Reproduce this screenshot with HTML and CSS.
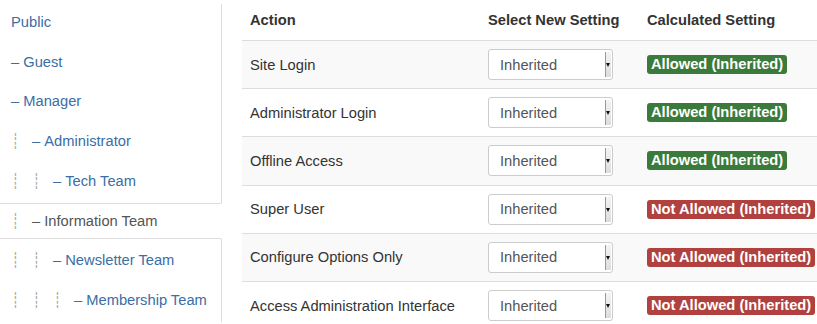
FILE: index.html
```html
<!DOCTYPE html>
<html lang="en">
<head>
  <meta charset="UTF-8" />
  <title>Permissions</title>
  <link rel="stylesheet" href="styles.css">
</head>
<body>
  <div class="rules">
    <ul class="groups">
      <li><a href="#">Public</a></li>
      <li><a href="#">&ndash;&nbsp;Guest</a></li>
      <li><a href="#">&ndash;&nbsp;Manager</a></li>
      <li><a href="#"><span class="level">&#9482;</span>&ndash;&nbsp;Administrator</a></li>
      <li><a href="#"><span class="level">&#9482;</span><span class="level">&#9482;</span>&ndash;&nbsp;Tech Team</a></li>
      <li class="active"><a href="#"><span class="level">&#9482;</span>&ndash;&nbsp;Information Team</a></li>
      <li><a href="#"><span class="level">&#9482;</span><span class="level">&#9482;</span>&ndash;&nbsp;Newsletter Team</a></li>
      <li><a href="#"><span class="level">&#9482;</span><span class="level">&#9482;</span><span class="level">&#9482;</span>&ndash;&nbsp;Membership Team</a></li>
    </ul>

    <table class="actions">
      <colgroup>
        <col class="col-action">
        <col class="col-select">
        <col class="col-calc">
      </colgroup>
      <thead>
        <tr>
          <th>Action</th>
          <th>Select New Setting</th>
          <th>Calculated Setting</th>
        </tr>
      </thead>
      <tbody>
        <tr>
          <td>Site Login</td>
          <td><div class="select"><span>Inherited</span><i class="arrow"></i></div></td>
          <td><span class="badge ok">Allowed (Inherited)</span></td>
        </tr>
        <tr>
          <td>Administrator Login</td>
          <td><div class="select"><span>Inherited</span><i class="arrow"></i></div></td>
          <td><span class="badge ok">Allowed (Inherited)</span></td>
        </tr>
        <tr>
          <td>Offline Access</td>
          <td><div class="select"><span>Inherited</span><i class="arrow"></i></div></td>
          <td><span class="badge ok">Allowed (Inherited)</span></td>
        </tr>
        <tr>
          <td>Super User</td>
          <td><div class="select"><span>Inherited</span><i class="arrow"></i></div></td>
          <td><span class="badge no">Not Allowed (Inherited)</span></td>
        </tr>
        <tr>
          <td>Configure Options Only</td>
          <td><div class="select"><span>Inherited</span><i class="arrow"></i></div></td>
          <td><span class="badge no">Not Allowed (Inherited)</span></td>
        </tr>
        <tr>
          <td>Access Administration Interface</td>
          <td><div class="select"><span>Inherited</span><i class="arrow"></i></div></td>
          <td><span class="badge no">Not Allowed (Inherited)</span></td>
        </tr>
      </tbody>
    </table>
  </div>
</body>
</html>
```

FILE: styles.css
```css
body {
  margin: 0;
  font-family: "Liberation Sans", Arial, sans-serif;
  font-size: 14.7px;
  color: #333;
  background: #fff;
  overflow: hidden;
}
.rules {
  display: flex;
  align-items: flex-start;
}

/* group list on the left */
.groups {
  list-style: none;
  margin: 4px 0 0 -2px;
  padding: 0;
  width: 223px;
  flex: none;
  border-right: 1px solid #ddd;
}
.groups li {
  margin-bottom: 3px;
}
.groups a {
  display: block;
  padding: 8px 12px;
  line-height: 18.7px;
  border: 1px solid transparent;
  margin-right: -1px;
  color: #3a6ea5;
  text-decoration: none;
  white-space: nowrap;
}
.groups .active a {
  color: #555;
  background: #fff;
  border-color: #ddd transparent #ddd #ddd;
}
.groups .level {
  display: inline-block;
  width: 21px;
  color: #aaa;
  font-family: "DejaVu Sans", sans-serif;
}

/* actions table */
.actions {
  margin-left: 20px;
  border-collapse: collapse;
  table-layout: fixed;
  width: 575px;
  flex: none;
}
.col-action { width: 238px; }
.col-select { width: 159px; }
.col-calc { width: 178px; }
.actions th {
  height: 40px;
  padding: 0 8px;
  text-align: left;
  font-weight: bold;
  vertical-align: middle;
  white-space: nowrap;
}
.actions td {
  height: 48.2px;
  box-sizing: border-box;
  padding: 0 8px;
  border-top: 1px solid #ddd;
  vertical-align: middle;
  white-space: nowrap;
}
.actions tbody tr:nth-child(odd) td {
  background: #f9f9f9;
}

.select {
  display: flex;
  align-items: center;
  box-sizing: border-box;
  width: 125px;
  height: 31px;
  border: 1px solid #ccc;
  border-radius: 3px;
  background: #fff;
  color: #555;
}
.select span {
  flex: 1;
  padding-left: 11px;
}
.select .arrow {
  position: relative;
  width: 5px;
  height: 25px;
  margin-right: 1px;
  border-left: 1px solid #999;
  background: linear-gradient(#f4f4f4, #ddd);
}
.select .arrow::after {
  content: "";
  position: absolute;
  left: 0;
  top: 11px;
  border-left: 2.5px solid transparent;
  border-right: 2.5px solid transparent;
  border-top: 4px solid #111;
}

.badge {
  display: inline-block;
  padding: 1px 4px;
  line-height: 17px;
  border-radius: 3px;
  font-weight: bold;
  color: #fff;
}
.badge.ok {
  background: #3a7a3a;
}
.badge.no {
  background: #b0413e;
}
```
